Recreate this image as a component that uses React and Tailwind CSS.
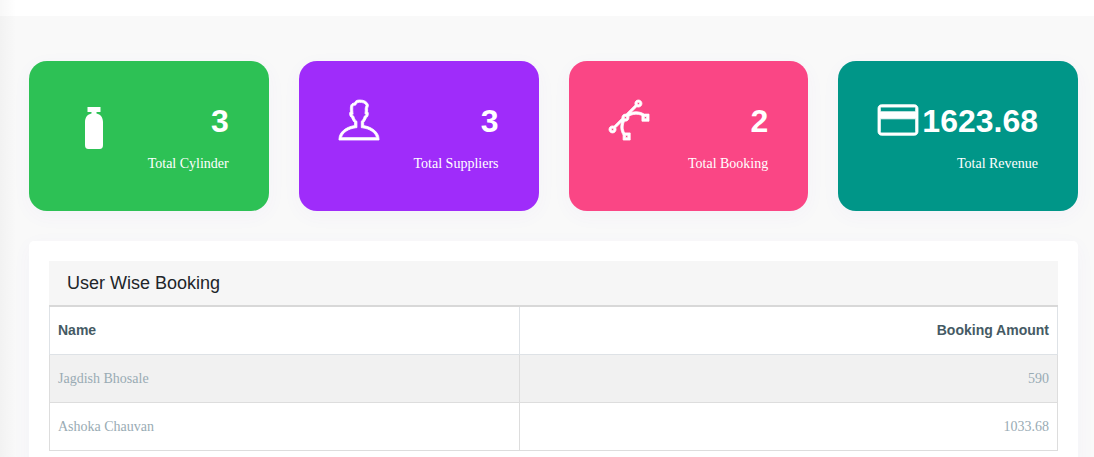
import React from 'react';
import { TfiUser, TfiVector, TfiCreditCard } from 'react-icons/tfi';

const bookings = [
    { name: 'Jagdish Bhosale', amount: '590' },
    { name: 'Ashoka Chauvan', amount: '1033.68' },
];

export default function App() {
    return (
        <div className="relative h-screen overflow-hidden bg-[#f9f9f9] font-['Liberation_Serif',serif]">
            <header className="h-4 bg-white" />
            <div className="absolute inset-y-0 left-0 w-4 bg-linear-to-r from-black/3 to-transparent" />

            <main className="pt-[45px] pr-4 pl-[29px]">
                <section className="grid grid-cols-4 gap-[30px]">
                    <StatCard
                        className="bg-[#2dc155]"
                        icon={<CylinderIcon />}
                        value="3"
                        label="Total Cylinder"
                    />
                    <StatCard
                        className="bg-[#9f2cfa]"
                        icon={<TfiUser size={40} strokeWidth={0.35} className="overflow-visible" />}
                        value="3"
                        label="Total Suppliers"
                    />
                    <StatCard
                        className="bg-[#fa4685]"
                        icon={<TfiVector size={40} strokeWidth={0.35} className="overflow-visible" />}
                        value="2"
                        label="Total Booking"
                    />
                    <StatCard
                        className="bg-[#009688]"
                        icon={<TfiCreditCard size={40} strokeWidth={0.35} className="overflow-visible" />}
                        value="1623.68"
                        label="Total Revenue"
                    />
                </section>

                <section className="mt-[30px] rounded-[5px] bg-white p-5 shadow-[0_5px_20px_rgba(110,80,240,0.04)]">
                    <h2 className="bg-[#f6f6f6] px-[18px] py-2 font-['Liberation_Sans',sans-serif] text-lg leading-7 text-[#212529]">
                        User Wise Booking
                    </h2>
                    <table className="w-full border-collapse text-sm leading-[23px] text-[#99abb4]">
                        <thead>
                            <tr className="font-['Liberation_Sans',sans-serif] text-[#455a64]">
                                <th className="w-[46.6%] border border-t-2 border-[#dee2e6] border-t-[#d8d8d8] px-2 py-3 text-left font-bold">
                                    Name
                                </th>
                                <th className="border border-t-2 border-[#dee2e6] border-t-[#d8d8d8] px-2 py-3 text-right font-bold">
                                    Booking Amount
                                </th>
                            </tr>
                        </thead>
                        <tbody>
                            {bookings.map((booking) => (
                                <tr key={booking.name} className="odd:bg-[#f1f1f1]">
                                    <td className="border border-[#dddddd] px-2 py-3">{booking.name}</td>
                                    <td className="border border-[#dddddd] px-2 py-3 text-right">{booking.amount}</td>
                                </tr>
                            ))}
                        </tbody>
                    </table>
                </section>
            </main>
        </div>
    );
}

function StatCard({ className, icon, value, label }) {
    return (
        <div className={`flex h-[150px] items-start justify-between rounded-[18px] px-10 pt-[39px] text-white shadow-[0_5px_20px_rgba(110,80,240,0.04)] ${className}`}>
            <div className="shrink-0">{icon}</div>
            <div className="text-right">
                <p className="font-['Liberation_Sans',sans-serif] text-[32px] leading-[42px] font-bold">{value}</p>
                <p className="mt-2.5 text-sm leading-6 whitespace-nowrap">{label}</p>
            </div>
        </div>
    );
}

function CylinderIcon() {
    return (
        <svg width="50" height="50" viewBox="0 0 50 50" fill="currentColor" aria-hidden="true">
            <path d="M18.500 7h13v5h-4v1.500c4 .8 6.500 4 6.500 8.500v23c0 2.500-1 4-3.500 4h-11C17 49 16 47.500 16 45V22c0-4.500 2.500-7.700 6.500-8.500V12h-4z" />
        </svg>
    );
}
